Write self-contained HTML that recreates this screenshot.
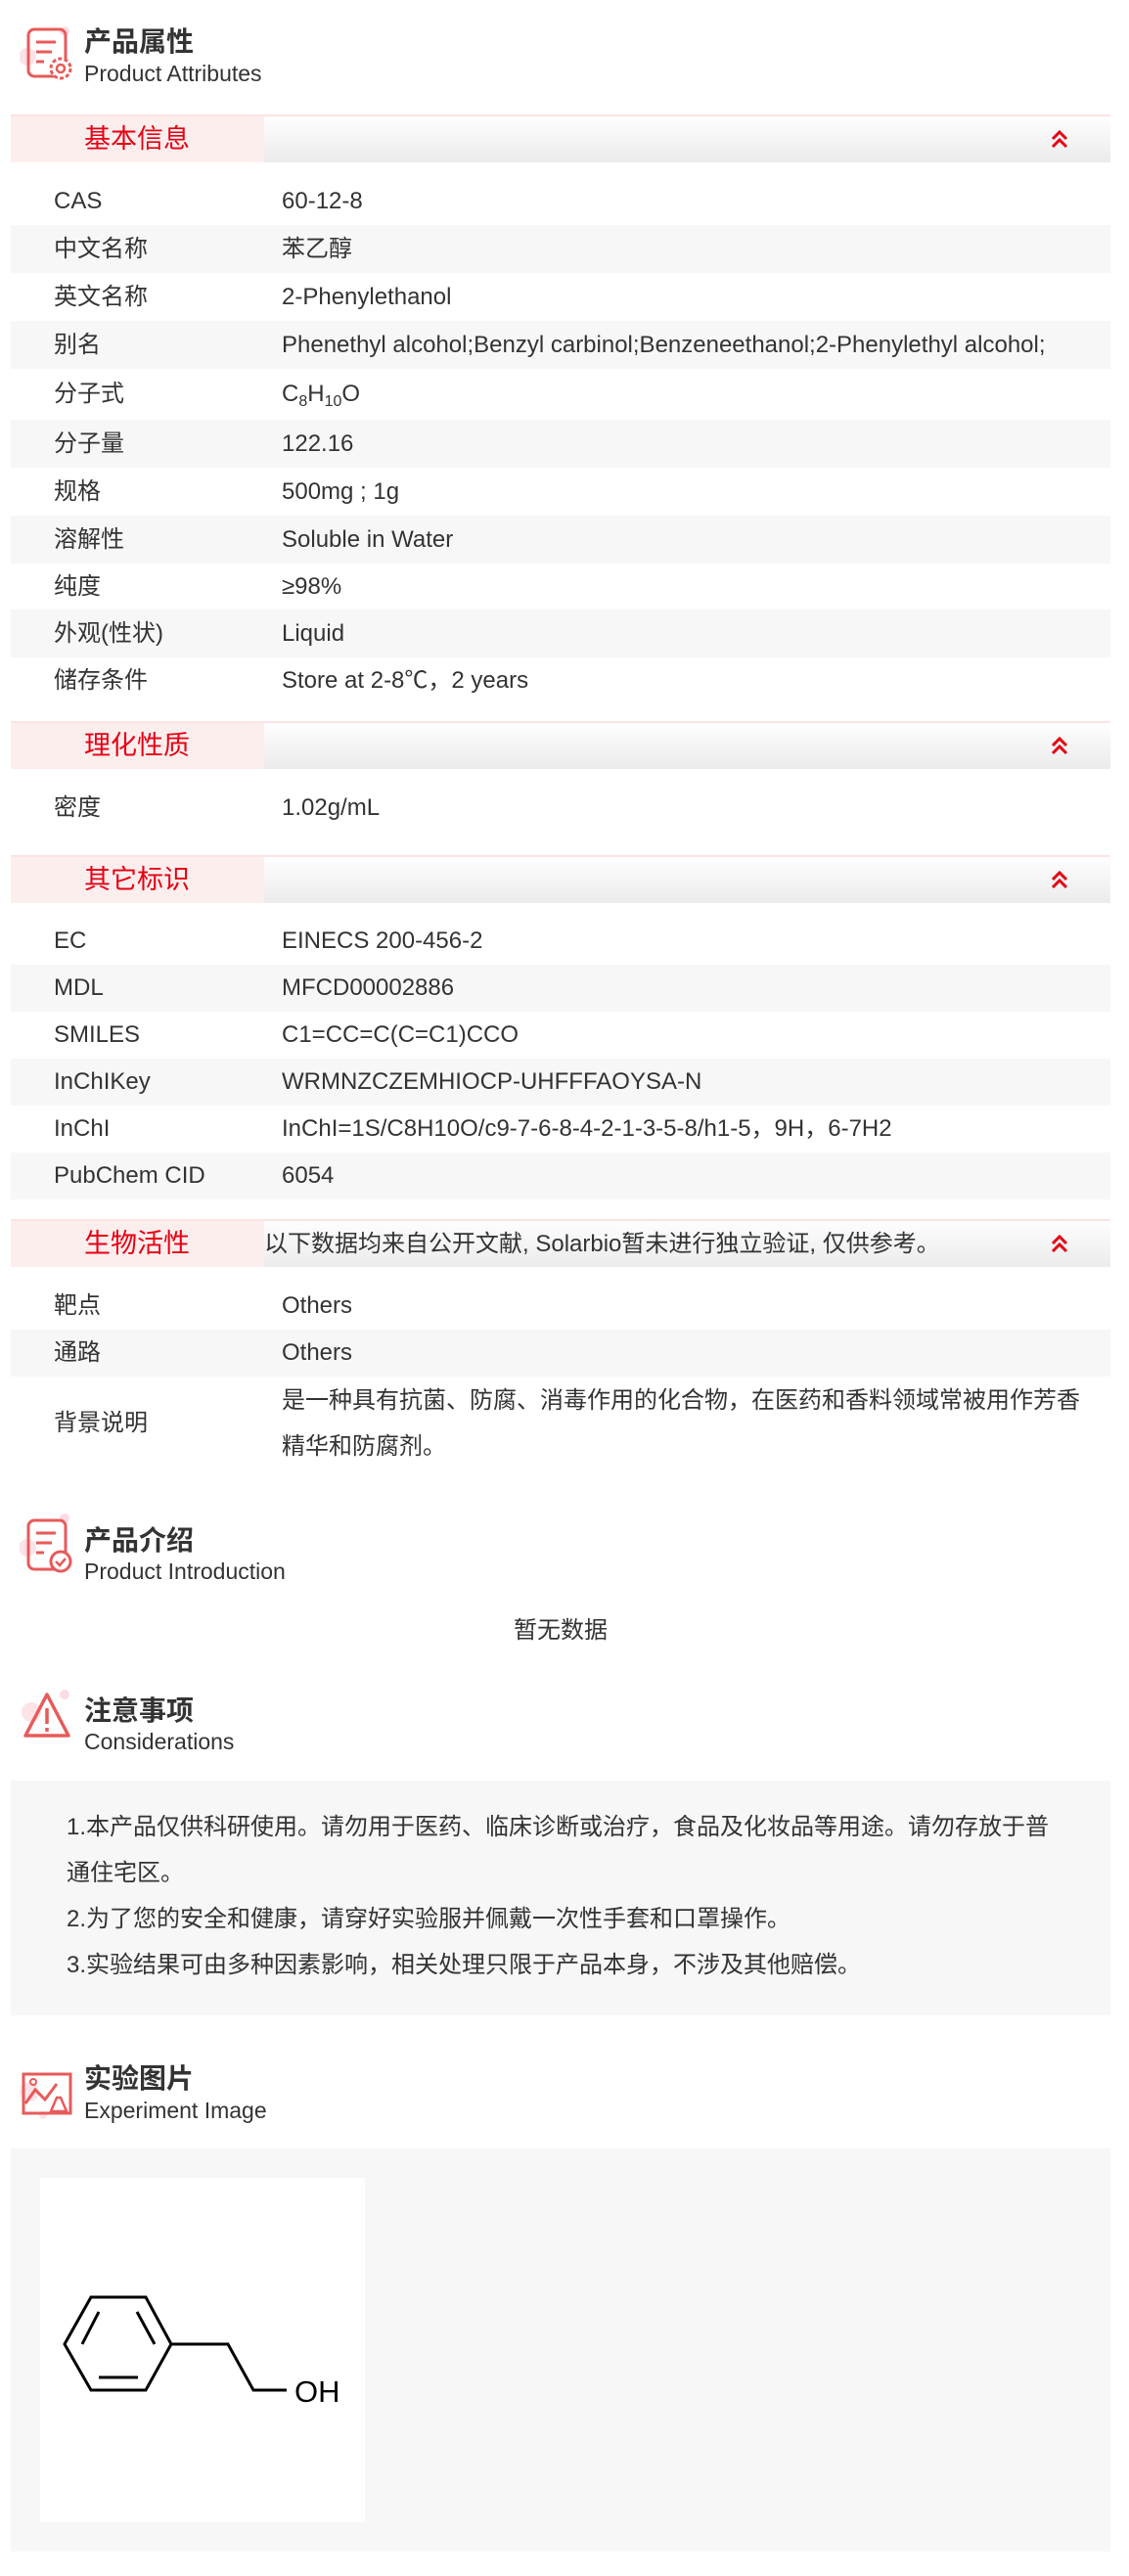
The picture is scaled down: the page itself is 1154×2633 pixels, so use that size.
<!DOCTYPE html>
<html><head><meta charset="utf-8"><style>
*{margin:0;padding:0;box-sizing:border-box}
body{width:1154px;height:2633px;background:#fff;position:relative;font-family:"Liberation Sans","Noto Sans CJK SC",sans-serif;color:#333;font-size:24px;overflow:hidden}
.a{position:absolute}
.ht{position:absolute;left:86px;font-size:28px;font-weight:bold;color:#333;line-height:32px}
.he{position:absolute;left:86px;font-size:23px;color:#333;line-height:26px}
.bar{position:absolute;left:11px;width:1124px;height:49px;border-top:2px solid #fde3e3;background:linear-gradient(#fefefe,#ebebeb)}
.bar .l{position:absolute;left:0;top:0;width:259px;height:47px;background:#fdeeee;color:#e60012;font-size:27px;line-height:47px;padding-left:75px}
.bar svg{position:absolute;left:1062px;top:14px}
.bar .n{position:absolute;left:259px;top:0;line-height:47px;font-size:24px;color:#333}
.row{position:absolute;left:11px;width:1124px;line-height:49px;height:49px}
.row.g{background:#f7f7f7}
.row .k{position:absolute;left:44px}
.row .v{position:absolute;left:277px}
sub{font-size:16px;vertical-align:-5px;line-height:0}
</style></head><body>

<svg class="a" style="left:20px;top:26px" width="56" height="58" viewBox="0 0 56 58">
<circle cx="46" cy="6" r="5" fill="#fcdbe3"/><circle cx="8" cy="32" r="9" fill="#fde3e8"/>
<rect x="9" y="4" width="38" height="48" rx="6" fill="none" stroke="#e85a5a" stroke-width="3"/>
<path d="M17 17h20M17 27h16M17 37h8" stroke="#e85a5a" stroke-width="3"/>
<circle cx="42" cy="44" r="10" fill="#fff" stroke="#e85a5a" stroke-width="3" stroke-dasharray="4 2.3"/><circle cx="42" cy="44" r="4" fill="none" stroke="#e85a5a" stroke-width="2.5"/>
</svg>
<div class="ht" style="top:27px">产品属性</div>
<div class="he" style="top:62px">Product Attributes</div>

<div class="bar" style="top:117px"><div class="l">基本信息</div><svg width="20" height="20" viewBox="0 0 20 20"><path d="M3 9l7-7 7 7M3 17l7-7 7 7" fill="none" stroke="#e60012" stroke-width="3"/></svg></div>
<div class="row" style="top:181px"><span class="k">CAS</span><span class="v">60-12-8</span></div>
<div class="row g" style="top:230px"><span class="k">中文名称</span><span class="v">苯乙醇</span></div>
<div class="row" style="top:279px"><span class="k">英文名称</span><span class="v">2-Phenylethanol</span></div>
<div class="row g" style="top:328px"><span class="k">别名</span><span class="v">Phenethyl alcohol;Benzyl carbinol;Benzeneethanol;2-Phenylethyl alcohol;</span></div>
<div class="row" style="top:377px;height:52px;line-height:52px"><span class="k">分子式</span><span class="v">C<sub>8</sub>H<sub>10</sub>O</span></div>
<div class="row g" style="top:429px"><span class="k">分子量</span><span class="v">122.16</span></div>
<div class="row" style="top:478px"><span class="k">规格</span><span class="v">500mg ; 1g</span></div>
<div class="row g" style="top:527px"><span class="k">溶解性</span><span class="v">Soluble in Water</span></div>
<div class="row" style="top:575px"><span class="k">纯度</span><span class="v">≥98%</span></div>
<div class="row g" style="top:623px"><span class="k">外观(性状)</span><span class="v">Liquid</span></div>
<div class="row" style="top:671px"><span class="k">储存条件</span><span class="v">Store at 2-8℃，2 years</span></div>

<div class="bar" style="top:737px"><div class="l">理化性质</div><svg width="20" height="20" viewBox="0 0 20 20"><path d="M3 9l7-7 7 7M3 17l7-7 7 7" fill="none" stroke="#e60012" stroke-width="3"/></svg></div>
<div class="row" style="top:801px"><span class="k">密度</span><span class="v">1.02g/mL</span></div>

<div class="bar" style="top:874px"><div class="l">其它标识</div><svg width="20" height="20" viewBox="0 0 20 20"><path d="M3 9l7-7 7 7M3 17l7-7 7 7" fill="none" stroke="#e60012" stroke-width="3"/></svg></div>
<div class="row" style="top:938px;height:48px;line-height:48px"><span class="k">EC</span><span class="v">EINECS 200-456-2</span></div>
<div class="row g" style="top:986px;height:48px;line-height:48px"><span class="k">MDL</span><span class="v">MFCD00002886</span></div>
<div class="row" style="top:1034px;height:48px;line-height:48px"><span class="k">SMILES</span><span class="v">C1=CC=C(C=C1)CCO</span></div>
<div class="row g" style="top:1082px;height:48px;line-height:48px"><span class="k">InChIKey</span><span class="v">WRMNZCZEMHIOCP-UHFFFAOYSA-N</span></div>
<div class="row" style="top:1130px;height:48px;line-height:48px"><span class="k">InChI</span><span class="v">InChI=1S/C8H10O/c9-7-6-8-4-2-1-3-5-8/h1-5，9H，6-7H2</span></div>
<div class="row g" style="top:1178px;height:48px;line-height:48px"><span class="k">PubChem CID</span><span class="v">6054</span></div>

<div class="bar" style="top:1246px"><div class="l">生物活性</div><div class="n">以下数据均来自公开文献, Solarbio暂未进行独立验证, 仅供参考。</div><svg width="20" height="20" viewBox="0 0 20 20"><path d="M3 9l7-7 7 7M3 17l7-7 7 7" fill="none" stroke="#e60012" stroke-width="3"/></svg></div>
<div class="row" style="top:1311px;height:48px;line-height:48px"><span class="k">靶点</span><span class="v">Others</span></div>
<div class="row g" style="top:1359px;height:48px;line-height:48px"><span class="k">通路</span><span class="v">Others</span></div>
<div class="row" style="top:1407px;height:96px;line-height:47px"><span class="k" style="top:24px">背景说明</span><span class="v" style="width:830px;top:1px">是一种具有抗菌、防腐、消毒作用的化合物，在医药和香料领域常被用作芳香精华和防腐剂。</span></div>

<svg class="a" style="left:20px;top:1544px" width="56" height="66" viewBox="0 0 56 66">
<circle cx="46" cy="8" r="5" fill="#fcdbe3"/><circle cx="8" cy="38" r="9" fill="#fde3e8"/>
<rect x="9" y="10" width="38" height="50" rx="6" fill="none" stroke="#e85a5a" stroke-width="3"/>
<path d="M17 23h20M17 33h16M17 43h8" stroke="#e85a5a" stroke-width="3"/>
<circle cx="42" cy="52" r="10" fill="#fff" stroke="#e85a5a" stroke-width="3"/><path d="M37 52l4 4 6-7" fill="none" stroke="#e85a5a" stroke-width="2.5"/>
</svg>
<div class="ht" style="top:1559px">产品介绍</div>
<div class="he" style="top:1593px">Product Introduction</div>
<div class="a" style="left:0;width:1146px;text-align:center;top:1653px;line-height:28px">暂无数据</div>

<svg class="a" style="left:18px;top:1726px" width="56" height="56" viewBox="0 0 56 56">
<circle cx="48" cy="6" r="5" fill="#fcdbe3"/><circle cx="14" cy="24" r="10" fill="#fde3e8"/>
<path d="M30 6L52 48H8Z" fill="none" stroke="#e85a5a" stroke-width="3.5" stroke-linejoin="round"/>
<path d="M30 20v16M30 40v4" stroke="#e85a5a" stroke-width="3.5"/>
</svg>
<div class="ht" style="top:1733px">注意事项</div>
<div class="he" style="top:1767px">Considerations</div>
<div class="a" style="left:11px;top:1820px;width:1124px;height:240px;background:#f7f7f7;padding:24px 50px 0 57px;line-height:47px">
1.本产品仅供科研使用。请勿用于医药、临床诊断或治疗，食品及化妆品等用途。请勿存放于普通住宅区。<br>2.为了您的安全和健康，请穿好实验服并佩戴一次性手套和口罩操作。<br>3.实验结果可由多种因素影响，相关处理只限于产品本身，不涉及其他赔偿。
</div>

<svg class="a" style="left:18px;top:2114px" width="58" height="56" viewBox="0 0 58 56">
<circle cx="12" cy="24" r="10" fill="#fde3e8"/><circle cx="26" cy="48" r="4" fill="#fde3e8"/>
<rect x="6" y="6" width="48" height="40" fill="none" stroke="#e85a5a" stroke-width="3"/>
<path d="M8 36l10-14 10 10 12-16" fill="none" stroke="#e85a5a" stroke-width="3"/>
<circle cx="16" cy="14" r="3" fill="none" stroke="#e85a5a" stroke-width="2"/>
<path d="M40 30l-6 14h16l-6-14z" fill="#fff" stroke="#e85a5a" stroke-width="2.5"/>
</svg>
<div class="ht" style="top:2109px">实验图片</div>
<div class="he" style="top:2144px">Experiment Image</div>
<div class="a" style="left:11px;top:2196px;width:1124px;height:412px;background:#f7f7f7"></div>
<div class="a" style="left:41px;top:2226px;width:332px;height:352px;background:#fff"></div>
<svg class="a" style="left:0;top:2300px" width="380" height="180" viewBox="0 2300 380 180">
<g fill="none" stroke="#000" stroke-width="3">
<path d="M93 2348H149L175 2396L149 2443H93L66 2396Z"/>
<path d="M101 2363L84 2396M140 2363L158 2396M101 2430H141"/>
<path d="M175 2396H233L259 2443H293"/>
</g>
<text x="301" y="2455" font-family="Liberation Sans,sans-serif" font-size="31" fill="#000">OH</text>
</svg>
</body></html>
